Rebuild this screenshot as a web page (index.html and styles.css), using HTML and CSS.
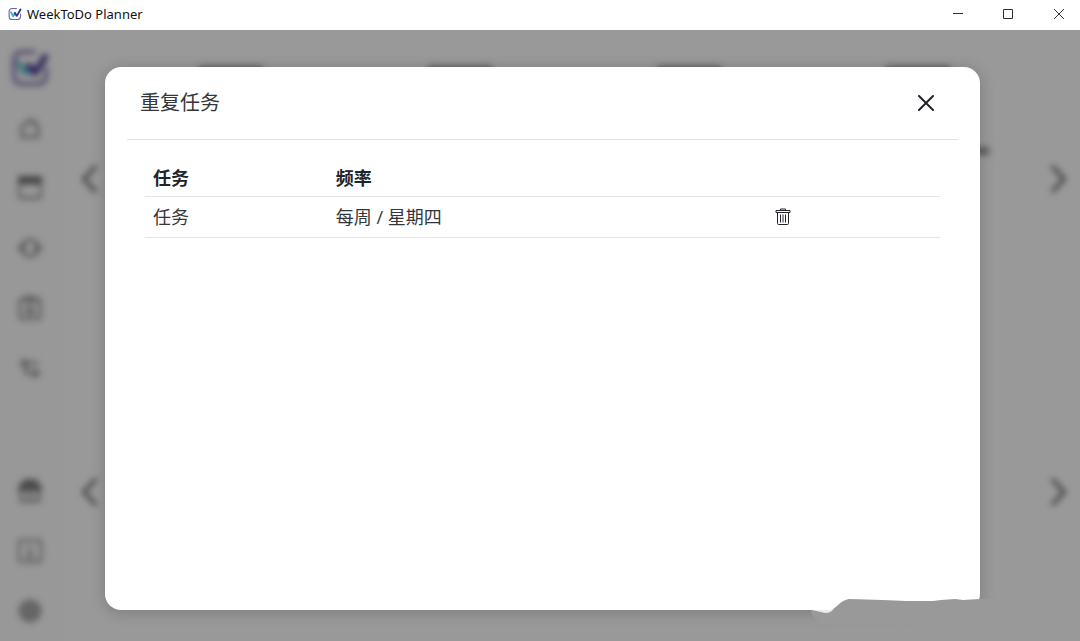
FILE: index.html
```html
<!DOCTYPE html>
<html lang="zh-CN">
<head>
    <meta charset="UTF-8">
    <meta name="viewport" content="width=device-width, initial-scale=1.0">
    <title>WeekToDo Planner</title>
    <link rel="stylesheet" href="styles.css">
</head>
<body>
    <header class="titlebar">
        <svg class="titlebar-logo" viewBox="0 0 38 38" fill="none" stroke-linecap="round" stroke-linejoin="round">
            <path d="M23 4H12Q3 4 3 13v12q0 9 9 9h13q9 0 9-9v-6" stroke="#6f62ac" stroke-width="3"/>
            <path d="M8 14l6 11 6-9" stroke="#35b6d6" stroke-width="5"/>
            <path d="M18 16l6 8L34 7" stroke="#3b2f86" stroke-width="5"/>
        </svg>
        <span class="titlebar-name">WeekToDo Planner</span>
        <button class="window-btn" type="button" aria-label="最小化">
            <svg viewBox="0 0 10 10"><path d="M0 4.500h10"/></svg>
        </button>
        <button class="window-btn" type="button" aria-label="最大化">
            <svg viewBox="0 0 10 10"><path d="M.5.5h9v9h-9z"/></svg>
        </button>
        <button class="window-btn" type="button" aria-label="关闭窗口">
            <svg viewBox="0 0 10 10"><path d="M0 0l10 10M10 0L0 10"/></svg>
        </button>
    </header>

    <div class="app">
        <div class="planner" inert>
            <nav class="sidebar">
                <div class="logo">
                    <svg viewBox="0 0 38 38" fill="none" stroke-linecap="round" stroke-linejoin="round">
                        <path d="M23 3H12Q3 3 3 12v13q0 10 9 10h14q9 0 9-9v-7" stroke="#8d80b8" stroke-width="4"/>
                        <path d="M8 15l7 9 4-5" stroke="#62c4d0" stroke-width="6"/>
                        <path d="M18 17l6 7L34 8" stroke="#4a3c94" stroke-width="6"/>
                    </svg>
                </div>
                <button class="nav-btn" type="button" aria-label="主页">
                    <svg viewBox="0 0 24 24"><path d="M4 11l8-7 8 7v10H4zM17 4v4"/></svg>
                </button>
                <button class="nav-btn" type="button" aria-label="日历">
                    <svg viewBox="0 0 24 24"><rect x="1" y="1" width="22" height="21" rx="3"/><path class="dark" d="M1 1h22v6H1z"/></svg>
                </button>
                <button class="nav-btn" type="button" aria-label="重复">
                    <svg viewBox="0 0 24 24"><path d="M4 11a8 8 0 0 1 15-3M20 13a8 8 0 0 1-15 3M1 11h6l-3 4zM17 13h6l-3-4z"/></svg>
                </button>
                <button class="nav-btn" type="button" aria-label="任务单">
                    <svg viewBox="0 0 24 24"><rect x="2" y="3" width="20" height="20" rx="2"/><path d="M8 1h8v4H8zM12 9v9M8 13h8M8 18h8"/></svg>
                </button>
                <button class="nav-btn" type="button" aria-label="导入导出">
                    <svg viewBox="0 0 24 24"><path d="M20 7H4l4-4M4 7l4 5M8 8v9h12l-4-4M20 17l-4 5"/></svg>
                </button>
                <button class="nav-btn nav-bottom" type="button" aria-label="礼物">
                    <svg viewBox="0 0 24 24"><path class="dark" d="M2 7h20v4H2zM6 2h12v5H6z"/><path d="M3 11v11h18V11M12 6v16"/></svg>
                </button>
                <button class="nav-btn" type="button" aria-label="信息">
                    <svg viewBox="0 0 24 24"><rect x="1" y="1" width="22" height="22" rx="3"/><path d="M12 6v2M10 11h2v7M9 18h6"/></svg>
                </button>
                <button class="nav-btn" type="button" aria-label="设置">
                    <svg viewBox="0 0 24 24"><circle class="solid" cx="12" cy="12" r="10"/></svg>
                </button>
            </nav>
            <main class="boards">
                <section class="board">
                    <button class="arrow" type="button" aria-label="上一页">
                        <svg viewBox="0 0 18 30"><path d="M15 2L3 15l12 13"/></svg>
                    </button>
                    <div class="days">
                        <div class="day"></div>
                        <div class="day"></div>
                        <div class="day"></div>
                        <div class="day"><div class="day-task"></div></div>
                    </div>
                    <button class="arrow" type="button" aria-label="下一页">
                        <svg viewBox="0 0 18 30"><path d="M3 2l12 13L3 28"/></svg>
                    </button>
                </section>
                <section class="board board-lists">
                    <button class="arrow" type="button" aria-label="上一组">
                        <svg viewBox="0 0 18 30"><path d="M15 2L3 15l12 13"/></svg>
                    </button>
                    <button class="arrow" type="button" aria-label="下一组">
                        <svg viewBox="0 0 18 30"><path d="M3 2l12 13L3 28"/></svg>
                    </button>
                </section>
            </main>
        </div>

        <div class="backdrop">
            <div class="modal" role="dialog" aria-labelledby="modalTitle">
                <div class="modal-header">
                    <h5 class="modal-title" id="modalTitle">重复任务</h5>
                    <button class="modal-close" type="button" aria-label="关闭">
                        <svg viewBox="0 0 16 16"><path d="M1 1l14 14M15 1L1 15"/></svg>
                    </button>
                </div>
                <div class="modal-body">
                    <table class="task-table">
                        <thead>
                            <tr>
                                <th class="col-task" scope="col">任务</th>
                                <th class="col-rate" scope="col">频率</th>
                                <th></th>
                            </tr>
                        </thead>
                        <tbody>
                            <tr>
                                <td>任务</td>
                                <td>每周 / 星期四</td>
                                <td>
                                    <button class="delete-btn" type="button" aria-label="删除">
                                        <svg viewBox="0 0 16 18"><path d="M1 2.500h14v2H1zM5.500 2V1h5v1M2.500 5v10.500q0 1 1 1h9q1 0 1-1V5M5.500 6.500v8M8 6.500v8M10.500 6.500v8"/></svg>
                                    </button>
                                </td>
                            </tr>
                        </tbody>
                    </table>
                </div>
                <svg class="smear" viewBox="0 0 200 30">
                    <path d="M0 14V17l8 11 192 2V2L169 3 152 4 144 3 130 4 122 5 95 5 72 4 38 3Q32 4 27 9T18 14z" fill="#999"/>
                    <path d="M0 12h23Q21 17 14 17L1 14z" fill="#fff" opacity=".8"/>
                </svg>
            </div>
        </div>
    </div>
</body>
</html>
```
FILE: styles.css
```css
* {
    box-sizing: border-box;
}

body {
    margin: 0;
    height: 100vh;
    display: flex;
    flex-direction: column;
    overflow: hidden;
    background: #fff;
    color: #212529;
    font-family: "Open Sans", "Noto Sans CJK SC", sans-serif;
}

button {
    display: flex;
    align-items: center;
    justify-content: center;
    padding: 0;
    border: none;
    background: none;
    color: inherit;
    cursor: pointer;
}

svg {
    display: block;
}

/* Window title bar */
.titlebar {
    display: flex;
    align-items: center;
    height: 30px;
    padding: 0 0 2px 8px;
    color: #111;
}

.titlebar-logo {
    width: 14px;
    height: 14px;
}

.titlebar-name {
    flex: 1;
    margin-left: 5px;
    font-family: "Noto Sans", sans-serif;
    font-size: 13px;
}

.window-btn {
    width: 50px;
    height: 28px;
}

.window-btn:last-child {
    width: 52px;
    margin-right: -5px;
}

.window-btn svg {
    width: 10px;
    height: 10px;
    fill: none;
    stroke: #333;
    stroke-width: 1;
}

/* Planner behind the dialog */
.app {
    flex: 1;
    position: relative;
    overflow: hidden;
}

.planner {
    display: flex;
    height: 100%;
    filter: blur(3px);
}

.sidebar {
    display: flex;
    flex-direction: column;
    width: 60px;
    padding-top: 8px;
    background: #fdfdfd;
}

.logo {
    display: flex;
    align-items: center;
    justify-content: center;
    height: 60px;
}

.logo svg {
    width: 38px;
    height: 38px;
}

.nav-btn {
    height: 60px;
}

.nav-btn svg {
    width: 24px;
    height: 24px;
    fill: none;
    stroke: #999;
    stroke-width: 3;
}

.nav-btn .solid {
    fill: #aaa;
    stroke: #aaa;
}

.nav-btn .dark {
    fill: #777;
    stroke: #777;
}

.nav-bottom {
    margin-top: auto;
}

.boards {
    flex: 1;
    display: grid;
    grid-template-rows: 1fr 1fr;
    gap: 14px;
}

.board {
    display: flex;
    align-items: center;
    padding: 0 12px 0 20px;
}

.board-lists {
    justify-content: space-between;
}

.arrow svg {
    width: 20px;
    height: 30px;
    fill: none;
    stroke: #777;
    stroke-width: 4;
}

.days {
    flex: 1;
    align-self: stretch;
    display: flex;
    padding: 36px 16px 0;
}

.day {
    flex: 1;
}

.day::before {
    content: "";
    display: block;
    width: 64px;
    height: 12px;
    margin: 0 auto;
    background: #999;
}

.day-task {
    height: 8px;
    margin: 69px 43px 0 0;
    background: #999;
}

/* Dialog */
.backdrop {
    position: absolute;
    inset: 0;
    display: flex;
    padding: 37px 100px 31px 105px;
    background: rgba(0, 0, 0, 0.4);
}

.modal {
    flex: 1;
    position: relative;
    padding: 0 22px;
    border-radius: 16px;
    background: #fff;
    box-shadow: 0 2px 16px rgba(0, 0, 0, 0.2);
}

.modal-header {
    display: flex;
    align-items: center;
    justify-content: space-between;
    height: 73px;
    padding: 0 16px 0 13px;
    border-bottom: 1px solid #dee2e6;
}

.modal-title {
    margin: 0;
    font-size: 20px;
    font-weight: 400;
    line-height: 24px;
    color: #33373b;
}

.modal-close {
    width: 32px;
    height: 32px;
}

.modal-close svg {
    width: 16px;
    height: 16px;
    fill: none;
    stroke: #212529;
    stroke-width: 2;
    stroke-linecap: round;
}

.modal-body {
    padding: 16px 18px;
}

.task-table {
    width: 100%;
    border-collapse: separate;
    border-spacing: 0;
    font-size: 18px;
    line-height: 24px;
}

.task-table th,
.task-table td {
    height: 41px;
    padding: 8px;
    border-bottom: 1px solid #e3e5e7;
    text-align: left;
    vertical-align: middle;
}

.task-table th {
    padding: 10px 8px 6px;
    font-weight: 700;
}

.task-table td {
    color: #33373b;
}

.col-task {
    width: 23%;
}

.col-rate {
    width: 55%;
}

.delete-btn {
    width: 20px;
}

.delete-btn svg {
    width: 16px;
    height: 18px;
    fill: none;
    stroke: #212529;
    stroke-width: 1;
}

.smear {
    position: absolute;
    right: -31px;
    bottom: -16px;
    width: 200px;
    height: 30px;
}
```
